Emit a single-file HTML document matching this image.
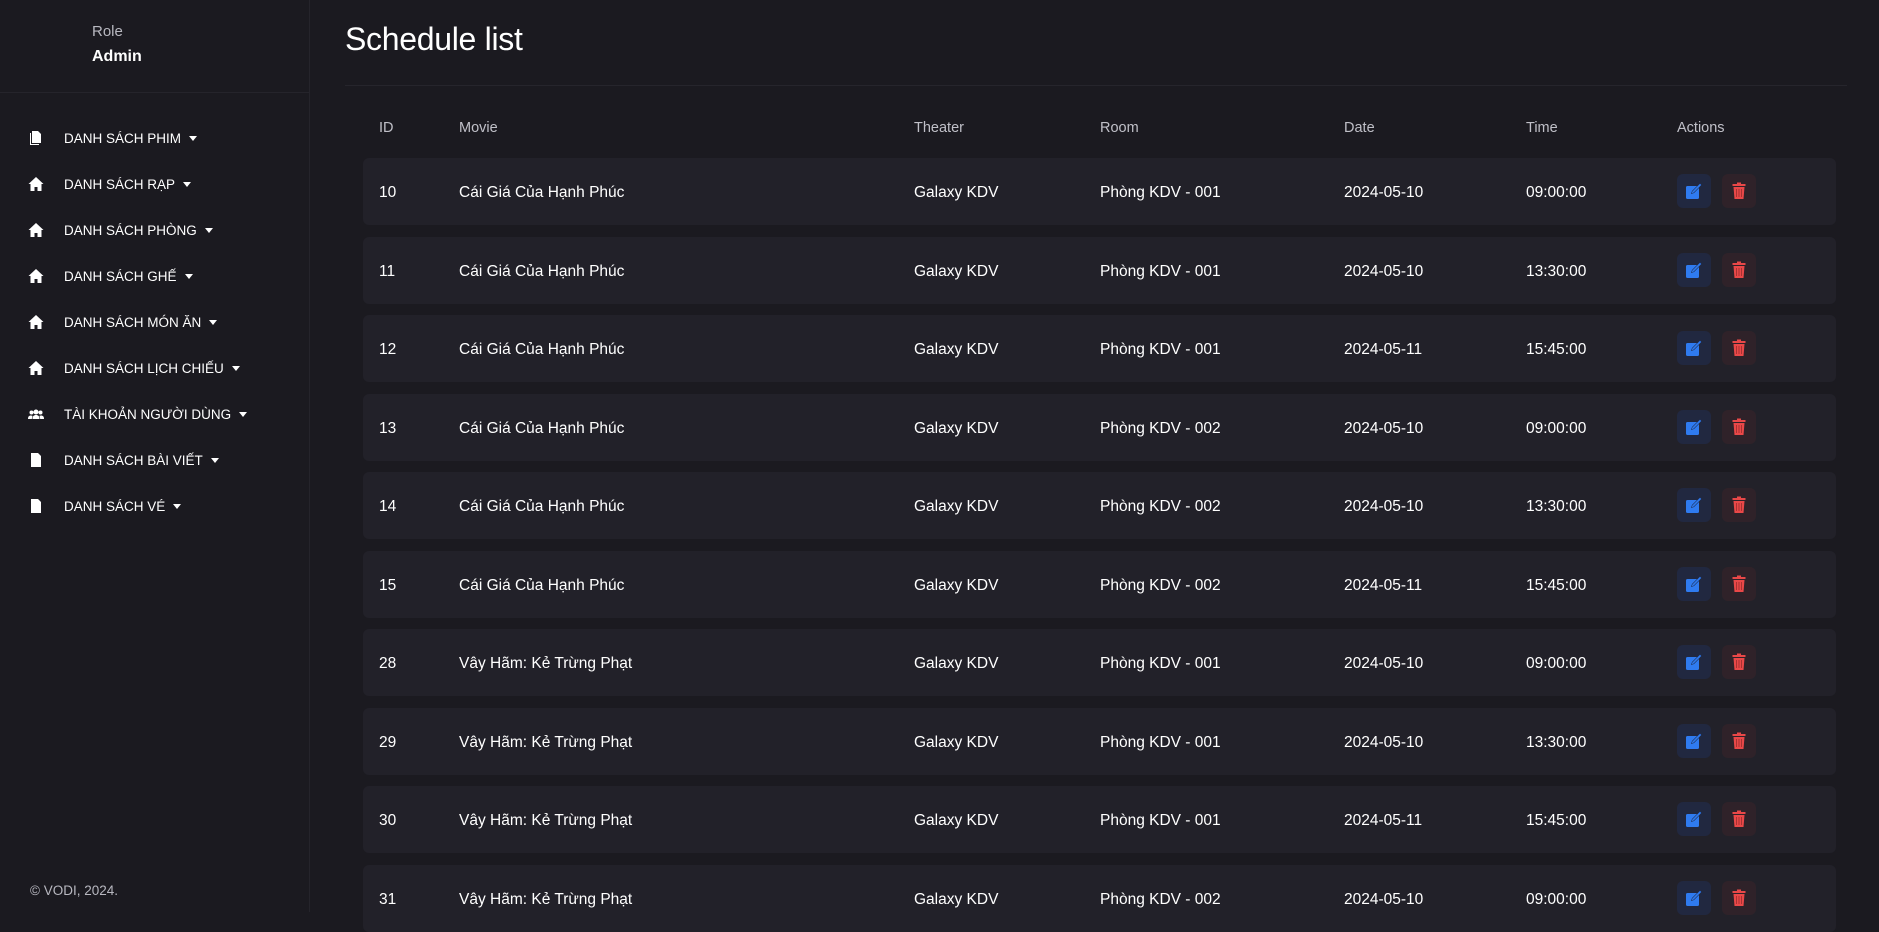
<!DOCTYPE html>
<html><head><meta charset="utf-8">
<style>
*{margin:0;padding:0;box-sizing:border-box}
html,body{width:1879px;height:912px;overflow:hidden;background:#1b1a20;font-family:"Liberation Sans",sans-serif;color:#fff}
.side{position:absolute;left:0;top:0;width:310px;height:912px;border-right:1px solid #25242b;background:#1b1a20}
.role{position:absolute;left:92px;top:23px;font-size:15px;color:#b8b8c0}
.admin{position:absolute;left:92px;top:48px;font-size:16px;font-weight:bold}
.sdiv{position:absolute;left:0;top:92px;width:310px;height:1px;background:#25242b}
.nav{position:absolute;left:28px;height:20px;display:flex;align-items:center;font-size:13.5px;color:#fff}
.nav svg{width:16px;height:16px;margin-right:20px}
.car{display:inline-block;width:0;height:0;border-left:4.5px solid transparent;border-right:4.5px solid transparent;border-top:5px solid #fff;margin-left:8px;margin-top:1px}
.foot{position:absolute;left:30px;top:883px;font-size:13.5px;color:#b8b8c0}
h1{position:absolute;left:345px;top:21px;font-size:32px;font-weight:normal;letter-spacing:-0.3px}
.hdiv{position:absolute;left:345px;top:85px;width:1502px;height:1px;background:#26252c}
.th{position:absolute;top:120px;font-size:14.5px;color:#c0c0c8}
.row{position:absolute;left:363px;width:1473px;height:67px;background:#222129;border-radius:6px}
.c{position:absolute;top:26px;font-size:15.5px;color:#fff}
.b{position:absolute;top:16px;width:34px;height:34px;border-radius:6px;display:flex;align-items:center;justify-content:center}
.e{left:1314px;background:#212840}
.d{left:1359px;background:#2f2229}
</style></head><body>
<div class="side">
<div class="role">Role</div>
<div class="admin">Admin</div>
<div class="sdiv"></div>

<div class="nav" style="top:128px"><svg viewBox="0 0 16 16"><path d="M4 1h6l3 3v9H4z" fill="#fff"/><path d="M2 3h1v11h8v1H2z" fill="#fff"/></svg>DANH SÁCH PHIM<span class="car"></span></div>
<div class="nav" style="top:174px"><svg viewBox="0 0 16 16"><path d="M8 1L0.5 8h2v7h4v-4h3v4h4V8h2z" fill="#fff"/></svg>DANH SÁCH RẠP<span class="car"></span></div>
<div class="nav" style="top:220px"><svg viewBox="0 0 16 16"><path d="M8 1L0.5 8h2v7h4v-4h3v4h4V8h2z" fill="#fff"/></svg>DANH SÁCH PHÒNG<span class="car"></span></div>
<div class="nav" style="top:266px"><svg viewBox="0 0 16 16"><path d="M8 1L0.5 8h2v7h4v-4h3v4h4V8h2z" fill="#fff"/></svg>DANH SÁCH GHẾ<span class="car"></span></div>
<div class="nav" style="top:312px"><svg viewBox="0 0 16 16"><path d="M8 1L0.5 8h2v7h4v-4h3v4h4V8h2z" fill="#fff"/></svg>DANH SÁCH MÓN ĂN<span class="car"></span></div>
<div class="nav" style="top:358px"><svg viewBox="0 0 16 16"><path d="M8 1L0.5 8h2v7h4v-4h3v4h4V8h2z" fill="#fff"/></svg>DANH SÁCH LỊCH CHIẾU<span class="car"></span></div>
<div class="nav" style="top:404px"><svg viewBox="0 0 16 16"><circle cx="8" cy="6" r="2.5" fill="#fff"/><circle cx="3.5" cy="6.5" r="2" fill="#fff"/><circle cx="12.5" cy="6.5" r="2" fill="#fff"/><path d="M4.5 13c0-3 1.5-4 3.5-4s3.5 1 3.5 4z M0 13c0-2.5 1-3.5 3-3.5 1 0 1.5.5 1.5.5L3.8 13z M16 13c0-2.5-1-3.5-3-3.5-1 0-1.5.5-1.5.5l.7 3z" fill="#fff"/></svg>TÀI KHOẢN NGƯỜI DÙNG<span class="car"></span></div>
<div class="nav" style="top:450px"><svg viewBox="0 0 16 16"><path d="M3 1h7l3 3v11H3z" fill="#fff"/></svg>DANH SÁCH BÀI VIẾT<span class="car"></span></div>
<div class="nav" style="top:496px"><svg viewBox="0 0 16 16"><path d="M3 1h7l3 3v11H3z" fill="#fff"/></svg>DANH SÁCH VÉ<span class="car"></span></div>

<div class="foot">© VODI, 2024.</div>
</div>

<h1>Schedule list</h1>
<div class="hdiv"></div>
<div class="th" style="left:379px">ID</div>
<div class="th" style="left:459px">Movie</div>
<div class="th" style="left:914px">Theater</div>
<div class="th" style="left:1100px">Room</div>
<div class="th" style="left:1344px">Date</div>
<div class="th" style="left:1526px">Time</div>
<div class="th" style="left:1677px">Actions</div>

<div id="rows"></div>
<script>
var d=[["10","Cái Giá Của Hạnh Phúc","001","2024-05-10","09:00:00"],
["11","Cái Giá Của Hạnh Phúc","001","2024-05-10","13:30:00"],
["12","Cái Giá Của Hạnh Phúc","001","2024-05-11","15:45:00"],
["13","Cái Giá Của Hạnh Phúc","002","2024-05-10","09:00:00"],
["14","Cái Giá Của Hạnh Phúc","002","2024-05-10","13:30:00"],
["15","Cái Giá Của Hạnh Phúc","002","2024-05-11","15:45:00"],
["28","Vây Hãm: Kẻ Trừng Phạt","001","2024-05-10","09:00:00"],
["29","Vây Hãm: Kẻ Trừng Phạt","001","2024-05-10","13:30:00"],
["30","Vây Hãm: Kẻ Trừng Phạt","001","2024-05-11","15:45:00"],
["31","Vây Hãm: Kẻ Trừng Phạt","002","2024-05-10","09:00:00"]];
var edit='<svg width="18" height="18" viewBox="0 0 18 18"><rect x="1" y="4" width="13" height="13" rx="1.5" fill="#2f7bf0"/><path d="M6 12l1-3 8-8 2 2-8 8z" fill="#1e2a4a"/><path d="M6.8 11.2l.6-1.8 7.6-7.6 1.2 1.2-7.6 7.6z" fill="#2f7bf0"/></svg>';
var del='<svg width="14" height="18" viewBox="0 0 14 18"><rect x="0.5" y="2" width="13" height="2" fill="#e94848"/><rect x="5" y="0.5" width="4" height="2" fill="#e94848"/><path d="M1.5 5h11l-1 12h-9z" fill="#e94848"/><path d="M4.5 7v8M7 7v8M9.5 7v8" stroke="#a83232" stroke-width="1"/></svg>';
var h='';
d.forEach(function(r,i){var t=158+i*78.5;
h+='<div class="row" style="top:'+t+'px"><div class="c" style="left:16px">'+r[0]+'</div><div class="c" style="left:96px">'+r[1]+'</div><div class="c" style="left:551px">Galaxy KDV</div><div class="c" style="left:737px">Phòng KDV - '+r[2]+'</div><div class="c" style="left:981px">'+r[3]+'</div><div class="c" style="left:1163px">'+r[4]+'</div><div class="b e">'+edit+'</div><div class="b d">'+del+'</div></div>';});
document.getElementById('rows').innerHTML=h;
</script>
</body></html>
